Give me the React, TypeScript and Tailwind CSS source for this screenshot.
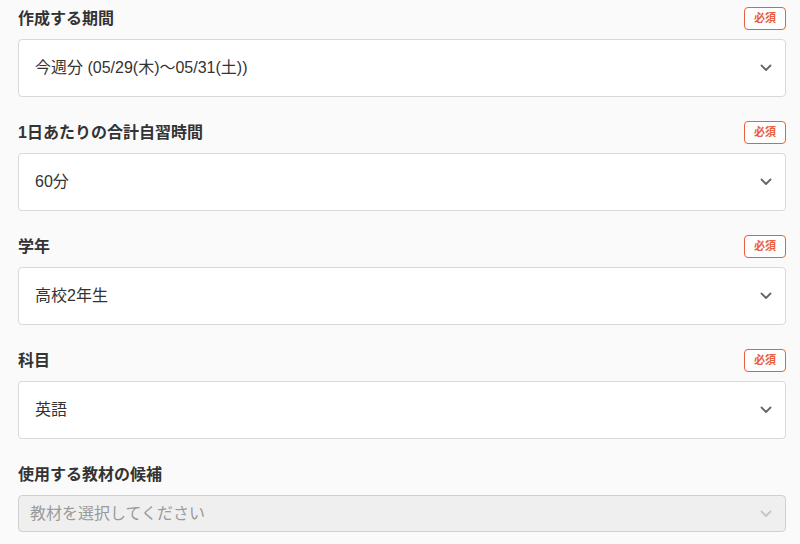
import React from 'react';

const fieldFont = { fontFamily: '"Liberation Sans", "Noto Sans CJK JP", sans-serif' };

function Chevron({ muted }: { muted?: boolean }) {
  return (
    <svg width="12" height="8" viewBox="0 0 12 8" className={muted ? 'text-[#c4c4c4]' : 'text-[#666]'}>
      <path d="M1.5 1.5 L6 6 L10.5 1.5" fill="none" stroke="currentColor" strokeWidth="1.8" strokeLinecap="round" strokeLinejoin="round" />
    </svg>
  );
}

function Field({ label, value, required = true }: { label: string; value: string; required?: boolean }) {
  return (
    <div>
      <div className="flex h-[23px] items-center justify-between">
        <span className="text-[16px] font-bold text-[#333]">{label}</span>
        {required && (
          <span className="flex h-[23px] w-[42px] items-center justify-center rounded-[4px] border border-[#e8603c] bg-white text-[11px] font-bold text-[#e8603c]">
            必須
          </span>
        )}
      </div>
      <div className="mt-[9px] flex h-[58px] items-center justify-between rounded-[4px] border border-[#d9d9d9] bg-white pl-[16px] pr-[13px]">
        <span className="text-[16px] text-[#333]">{value}</span>
        <Chevron />
      </div>
    </div>
  );
}

export default function App() {
  const fields = [
    { label: '作成する期間', value: '今週分 (05/29(木)〜05/31(土))' },
    { label: '1日あたりの合計自習時間', value: '60分' },
    { label: '学年', value: '高校2年生' },
    { label: '科目', value: '英語' },
  ];

  return (
    <div className="h-[544px] w-[800px] overflow-hidden bg-[#fafafa] pl-[18px] pr-[14px] pt-[7px]" style={fieldFont}>
      <div className="flex flex-col gap-[24px]">
        {fields.map((f) => (
          <Field key={f.label} label={f.label} value={f.value} />
        ))}
        <div>
          <div className="flex h-[23px] items-center">
            <span className="text-[16px] font-bold text-[#333]">使用する教材の候補</span>
          </div>
          <div className="mt-[9px] flex h-[37px] items-center justify-between rounded-[4px] border border-[#d0d0d0] bg-[#efefef] pl-[11px] pr-[13px]">
            <span className="text-[16px] text-[#9a9a9a]">教材を選択してください</span>
            <Chevron muted />
          </div>
        </div>
      </div>
    </div>
  );
}
